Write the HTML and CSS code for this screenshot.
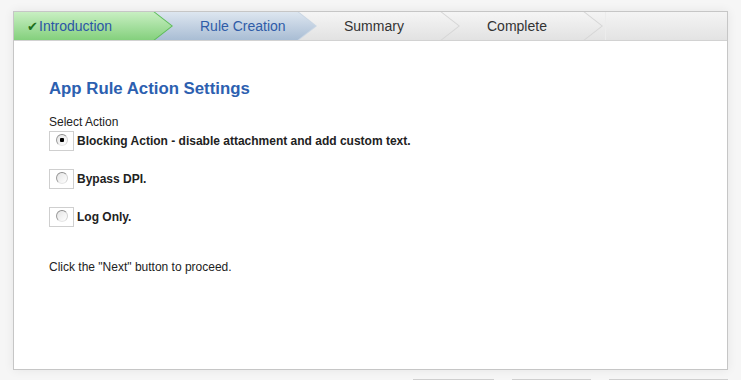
FILE: index.html
```html
<!doctype html>
<html lang="en">
<head>
    <meta charset="UTF-8">
    <title>App Rule Wizard</title>
    <link rel="stylesheet" href="styles.css">
</head>
<body>
<div class="wizard">
    <div class="steps">
        <div class="step step-done"><div class="step-fill"><span class="check">&#10004;</span>Introduction</div></div>
        <div class="step step-current"><div class="step-fill">Rule Creation</div></div>
        <div class="step"><div class="step-fill">Summary</div></div>
        <div class="step"><div class="step-fill">Complete</div></div>
        <div class="steps-rest"></div>
    </div>
    <div class="wizard-body">
        <h1>App Rule Action Settings</h1>
        <div class="field-label">Select Action</div>
        <label class="option">
            <span class="radio-box"><input type="radio" name="action" checked></span>
            <span>Blocking Action - disable attachment and add custom text.</span>
        </label>
        <label class="option">
            <span class="radio-box"><input type="radio" name="action"></span>
            <span>Bypass DPI.</span>
        </label>
        <label class="option">
            <span class="radio-box"><input type="radio" name="action"></span>
            <span>Log Only.</span>
        </label>
        <p class="hint">Click the "Next" button to proceed.</p>
    </div>
</div>
<div class="buttons">
    <button class="btn btn-back" aria-label="Back"></button>
    <button class="btn btn-next" aria-label="Next"></button>
    <button class="btn btn-cancel" aria-label="Cancel"></button>
</div>
</body>
</html>
```

FILE: styles.css
```css
body {
    margin: 0;
    padding: 11px 13px;
    background-color: #f6f6f6;
    font-family: "Liberation Sans", Arial, sans-serif;
    font-size: 12px;
    color: #222;
    overflow: hidden;
}

.wizard {
    height: 357px;
    background-color: #fff;
    border: 1px solid #c6c6c6;
    box-shadow: 0 0 10px rgba(0, 0, 0, 0.07);
}

/* step bar */
.steps {
    display: flex;
    height: 28px;
    background: linear-gradient(#f4f4f4, #e3e3e3);
    border-bottom: 1px solid #d2d2d2;
}

.step {
    position: relative;
    width: 161px;
    margin-right: -18px;
    background-color: #d6d6d6;
    clip-path: polygon(0 0, calc(100% - 18px) 0, 100% 50%, calc(100% - 18px) 100%, 0 100%);
}

.step:nth-child(1) { width: 159px; z-index: 4; }
.step:nth-child(2) { width: 162px; z-index: 3; }
.step:nth-child(3) { z-index: 2; }
.step:nth-child(4) { z-index: 1; }

.step-fill {
    display: flex;
    align-items: center;
    height: 100%;
    width: calc(100% - 1.5px);
    padding-left: 45px;
    box-sizing: border-box;
    font-size: 14px;
    color: #333;
    background: linear-gradient(#f5f5f5, #e2e2e2);
    clip-path: polygon(0 0, calc(100% - 18px) 0, 100% 50%, calc(100% - 18px) 100%, 0 100%);
}

.step-done {
    background-color: #5cbc58;
}

.step-done .step-fill {
    padding-left: 13px;
    color: #2b56a6;
    background: linear-gradient(#c8efc2, #84d07d);
}

.check {
    font-size: 13px;
    color: #1d6f1d;
    margin-right: 1px;
}

.step-current {
    background-color: #c9d6e4;
}

.step-current .step-fill {
    color: #2f5ca8;
    background: linear-gradient(#dde6f0, #a9bdd4);
}

.steps-rest {
    flex: 1;
    margin-left: 20px;
    border-left: 1px solid #ececec;
}

/* form */
.wizard-body {
    padding: 38px 35px;
}

.wizard-body h1 {
    margin: 0 0 16px;
    font-size: 16.8px;
    line-height: 20px;
    color: #2c60b0;
}

.field-label {
    line-height: 14px;
    margin-bottom: 2px;
}

.option {
    display: flex;
    align-items: center;
    gap: 3px;
    font-weight: bold;
    margin-bottom: 18px;
}

.radio-box {
    display: flex;
    align-items: center;
    width: 25px;
    height: 20px;
    box-sizing: border-box;
    border: 1px solid #cfcfcf;
    padding-left: 6px;
    padding-bottom: 3px;
}

.radio-box input {
    appearance: none;
    width: 12px;
    height: 12px;
    margin: 0;
    border-radius: 50%;
    border: 1px solid;
    border-color: #8c8c8c #d2d2d2 #e6e6e6 #9a9a9a;
    background: linear-gradient(135deg, #e4e4e4, #fff);
}

.radio-box input:checked {
    background: radial-gradient(circle, #000 0 2px, transparent 2.5px), linear-gradient(135deg, #e4e4e4, #fff);
}

.hint {
    margin: 33px 0 0;
    line-height: 14px;
}

/* bottom buttons */
.buttons {
    display: flex;
    justify-content: flex-end;
    gap: 18px;
    margin-top: 9px;
}

.btn {
    height: 26px;
    border: 1px solid #cfcfcf;
    background: linear-gradient(#f8f8f8, #e6e6e6);
}

.btn-back { width: 81px; }
.btn-next { width: 79px; }
.btn-cancel { width: 119px; }
```
